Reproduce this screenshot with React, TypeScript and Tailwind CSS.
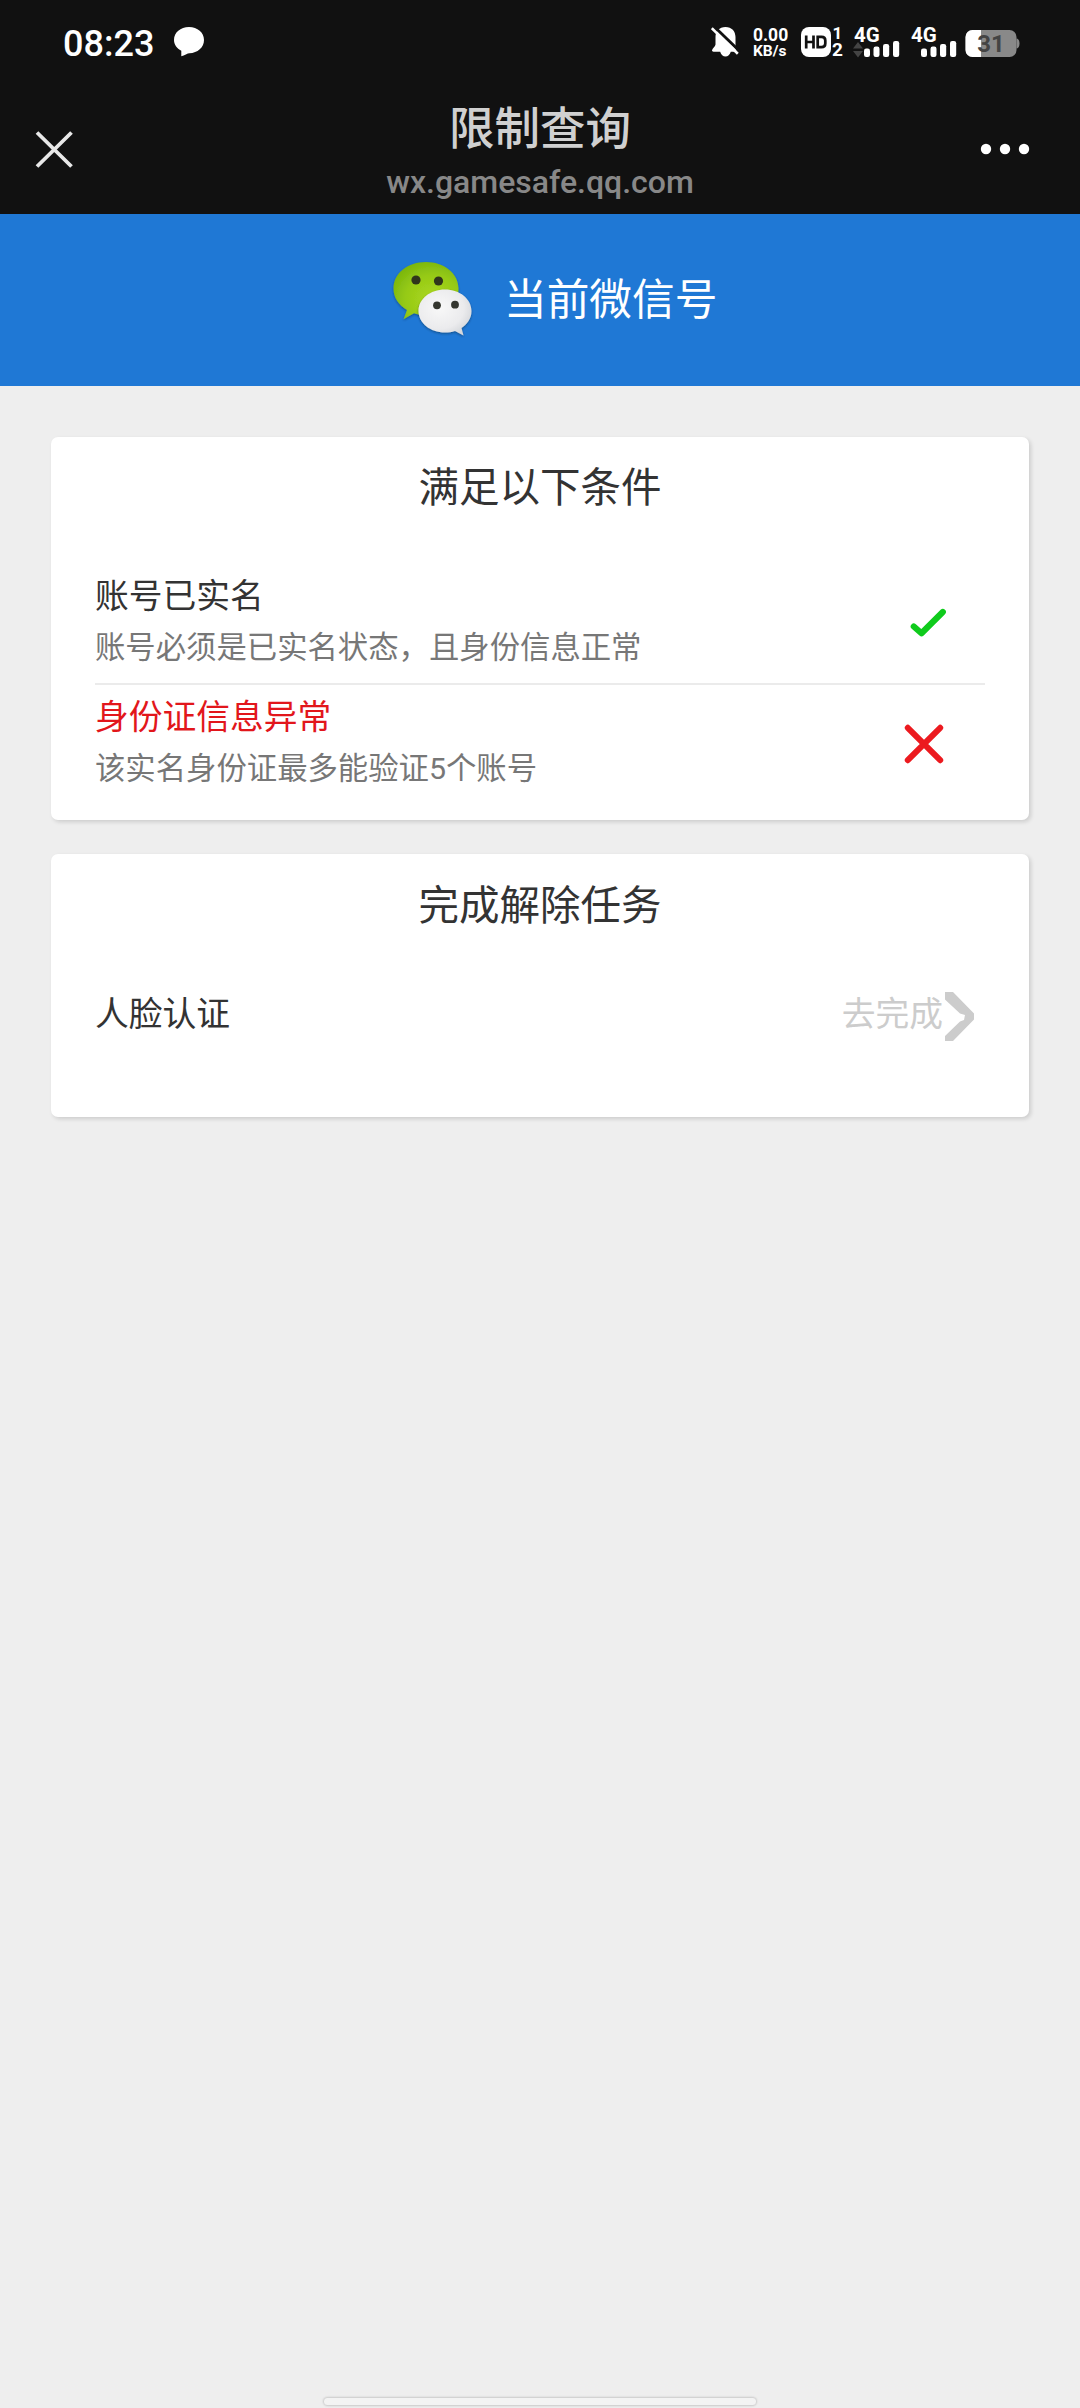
import React from "react";

const CJK = "font-['Roboto','Noto_Sans_CJK_SC',sans-serif]";

function MutedBell() {
  return (
    <svg className="block h-[32px] w-[30px]" viewBox="0 0 30 32">
      <path
        d="M14.500 1C8.300 1 4.500 5.200 4.500 11V18.500C4.500 20.500 1 22.500 1 24.500C1 25.300 1.500 25.700 2.500 25.700H9.200C10 28.700 12 30.500 14.500 30.500C17 30.500 18.800 28.700 19.800 25.700H24.500C25.500 25.700 25.500 24.500 24.900 23.700C24.500 22.700 24.500 20.500 24.500 18.500V11C24.500 5.200 20.700 1 14.500 1Z"
        fill="#fff"
      />
      <path d="M3 0.500L29 25.500" stroke="#111" strokeWidth="3" />
      <path d="M0.800 2.200L26.800 27.700" stroke="#fff" strokeWidth="2.600" />
    </svg>
  );
}

function HdBadge() {
  return (
    <div className="flex items-start">
      <svg className="block h-[32px] w-[31px]" viewBox="0 0 31 32">
        <rect x="1" y="1" width="30" height="30" rx="8" fill="#fff" />
        <path
          d="M6.200 9.500V22.500M13.500 9.500V22.500M6.200 16H13.500M17.700 10.800H21.500Q25.300 10.800 25.300 14.500V17.500Q25.300 21.200 21.500 21.200H17.700Z"
          fill="none"
          stroke="#111"
          strokeWidth="2.700"
        />
      </svg>
      <div className="flex w-[13px] flex-col items-center font-bold">
        <span className="text-[17px] leading-[15px]">1</span>
        <span className="text-[19px] leading-[18px]">2</span>
      </div>
    </div>
  );
}

function Signal({ arrows }: { arrows?: boolean }) {
  return (
    <div className="grid h-[32px] w-[50px]">
      <span className="col-start-1 row-start-1 ml-[2px] text-[20.500px] leading-[18px] font-bold">4G</span>
      <svg className="col-start-1 row-start-1 block h-[32px] w-[50px]" viewBox="0 0 50 32">
        {arrows && <path d="M1 22.500L6 16L11 22.500ZM1 25L6 31.500L11 25Z" fill="#444" />}
        <rect x="12" y="22.500" width="6" height="8.500" rx="2.200" fill="#fff" />
        <rect x="21.500" y="20.500" width="6" height="10.500" rx="2.200" fill="#fff" />
        <rect x="31" y="18" width="6.200" height="13" rx="2.200" fill="#fff" />
        <rect x="41" y="15" width="6.200" height="16" rx="2.200" fill="#fff" />
      </svg>
    </div>
  );
}

function Battery() {
  return (
    <div className="grid h-[32px] w-[56px]">
      <svg className="col-start-1 row-start-1 block h-[32px] w-[56px]" viewBox="0 0 56 32">
        <clipPath id="battery-body">
          <rect x="0.500" y="4" width="51" height="27" rx="7" />
        </clipPath>
        <g clipPath="url(#battery-body)">
          <rect x="0" y="0" width="56" height="32" fill="#898989" />
          <rect x="0" y="0" width="16" height="32" fill="#fff" />
        </g>
        <path d="M51.500 12.500H52Q54.500 13.500 54.500 17.500Q54.500 21.500 52 22.500H51.500Z" fill="#898989" />
      </svg>
      <span className="col-start-1 row-start-1 mt-[4px] mr-[4px] text-center text-[24px] leading-[28px] font-bold text-[#444]">31</span>
    </div>
  );
}

function WeChatLogo() {
  return (
    <svg className="block h-[80px] w-[84px]" viewBox="0 0 84 80">
      <defs>
        <radialGradient id="logo-green" cx="0.6" cy="0.65" r="0.7">
          <stop offset="0" stopColor="#acd81e" />
          <stop offset="0.6" stopColor="#96ca17" />
          <stop offset="1" stopColor="#79b50c" />
        </radialGradient>
        <radialGradient id="logo-white" cx="0.4" cy="0.4" r="0.65">
          <stop offset="0" stopColor="#f8f8f8" />
          <stop offset="0.7" stopColor="#ebebed" />
          <stop offset="1" stopColor="#d6d8dc" />
        </radialGradient>
        <filter id="logo-shadow" x="-20%" y="-20%" width="140%" height="140%">
          <feDropShadow dx="0" dy="1.200" stdDeviation="1.200" floodColor="#123" floodOpacity="0.450" />
        </filter>
      </defs>
      <path
        filter="url(#logo-shadow)"
        d="M36 4C53.500 4 68.500 15 68.500 30.500C68.500 46 54 57.500 36 57.500C31.500 57.500 27 56.500 24 55.300L13.500 61.300L17 52C8.500 47 3.500 39.500 3.500 30.500C3.500 15 18 4 36 4Z"
        fill="url(#logo-green)"
      />
      <circle cx="26" cy="22" r="4.600" fill="#30351c" />
      <circle cx="48.500" cy="23" r="4.600" fill="#30351c" />
      <path
        filter="url(#logo-shadow)"
        d="M55 31.500C69.800 31.500 81.500 41 81.500 53C81.500 60.200 77.500 66 71.500 70L73.500 77.500L65 73C62 74 58.700 74.500 55 74.500C40.200 74.500 28.500 65 28.500 53C28.500 41 40.200 31.500 55 31.500Z"
        fill="url(#logo-white)"
      />
      <circle cx="47" cy="47.300" r="3.900" fill="#34362f" />
      <circle cx="65" cy="46.700" r="3.900" fill="#34362f" />
    </svg>
  );
}

function Check() {
  return (
    <svg className="block h-[32px] w-[38px]" viewBox="0 0 38 32">
      <path d="M4.800 19.500L12.500 26.300L33.800 5" fill="none" stroke="#0fcb1c" strokeWidth="6.200" strokeLinecap="round" strokeLinejoin="round" />
    </svg>
  );
}

function Cross() {
  return (
    <svg className="block h-[42px] w-[42px]" viewBox="0 0 42 42">
      <path d="M4.800 4.800L37.200 37.200M37.200 4.800L4.800 37.200" fill="none" stroke="#ec1a1f" strokeWidth="6" strokeLinecap="round" />
    </svg>
  );
}

function StatusBar() {
  return (
    <div className="flex h-[84px] items-start pt-[26px] text-white">
      <span className="mt-px ml-[63px] w-[92px] text-[36px] leading-[34px] font-medium">08:23</span>
      <svg className="mt-px ml-[18px] block h-[31px] w-[32px]" viewBox="0 0 32 31">
        <path d="M16 0C24.500 0 31 5.500 31 13C31 20.500 24.500 26 16.500 26.200C14.500 26.200 11.500 28.500 8.300 29.200V23.700C3.800 21.300 1 17.500 1 13C1 5.500 7.500 0 16 0Z" fill="#fff" />
      </svg>
      <div className="ml-auto flex items-start pr-[59px]">
        <MutedBell />
        <div className="ml-[12px] flex w-[36px] flex-col font-bold">
          <span className="text-[17.500px] leading-[18px]">0.00</span>
          <span className="text-[15.500px] leading-[15px]">KB/s</span>
        </div>
        <div className="ml-[11px]"><HdBadge /></div>
        <div className="ml-[8px]"><Signal arrows /></div>
        <div className="ml-[7px]"><Signal /></div>
        <div className="ml-[6px]"><Battery /></div>
      </div>
    </div>
  );
}

function TitleBar() {
  return (
    <div className="grid h-[130px] grid-cols-[1fr_auto_1fr] items-start">
      <svg className="mt-[46px] ml-[35px] block h-[38px] w-[38px]" viewBox="0 0 38 38">
        <path d="M2 2.500L36.500 36.500M36.500 2.500L2 36.500" stroke="#e8e8e8" strokeWidth="3.800" />
      </svg>
      <div className="flex flex-col items-center pt-[14px]">
        <h1 className="text-[45.500px] leading-[64px] font-medium text-[#d0d0d0]">限制查询</h1>
        <span className="mt-[2px] text-[32px] leading-[36px] font-medium text-[#888]">wx.gamesafe.qq.com</span>
      </div>
      <svg className="mt-[59px] mr-[50px] block h-[12px] w-[50px] justify-self-end" viewBox="0 0 50 12">
        <circle cx="6" cy="6" r="5.200" fill="#fff" />
        <circle cx="25" cy="6" r="5.200" fill="#fff" />
        <circle cx="44" cy="6" r="5.200" fill="#fff" />
      </svg>
    </div>
  );
}

function Card({ title, className, children }: { title: string; className: string; children: React.ReactNode }) {
  return (
    <section className={`mx-[51px] rounded-[7px] bg-white px-[44px] shadow-[2px_2px_4px_rgba(0,0,0,0.14)] ${className}`}>
      <h2 className="text-center text-[40.500px] leading-[64px] text-[#333]">{title}</h2>
      {children}
    </section>
  );
}

function Condition({ title, note, failed }: { title: string; note: string; failed?: boolean }) {
  return (
    <div className="flex items-center justify-between">
      <div className="flex flex-col gap-[3px]">
        <h3 className={`text-[33.750px] leading-[48px] ${failed ? "text-[#e2161b]" : "text-[#333]"}`}>{title}</h3>
        <p className="text-[30.375px] leading-[48px] text-[#777]">{note}</p>
      </div>
      <div className={failed ? "mt-px mr-[40px]" : "mr-[38px]"}>{failed ? <Cross /> : <Check />}</div>
    </div>
  );
}

export default function App() {
  return (
    <div className={`flex h-[2408px] w-[1080px] flex-col bg-[#eee] ${CJK}`} lang="zh-CN">
      <header className="h-[214px] bg-[#111]">
        <StatusBar />
        <TitleBar />
      </header>
      <div className="flex h-[172px] items-start bg-[#1f78d5] pt-[44px] pl-[390px]">
        <WeChatLogo />
        <span className="mt-[10px] ml-[30px] text-[42.700px] leading-[64px] text-white">当前微信号</span>
      </div>
      <Card title="满足以下条件" className="mt-[51px] h-[383px] pt-[19px]">
        <div className="mt-[53px] border-b-2 border-[#ebebeb] pb-[11px]">
          <Condition title="账号已实名" note="账号必须是已实名状态，且身份信息正常" />
        </div>
        <div className="pt-[9px]">
          <Condition title="身份证信息异常" note="该实名身份证最多能验证5个账号" failed />
        </div>
      </Card>
      <Card title="完成解除任务" className="mt-[34px] h-[263px] pt-[20px]">
        <div className="mt-[53px] flex items-start justify-between pr-[11px]">
          <h3 className="text-[33.750px] leading-[48px] text-[#333]">人脸认证</h3>
          <div className="flex items-start text-[#ccc]">
            <span className="text-[33.750px] leading-[48px]">去完成</span>
            <svg className="mt-px ml-[2px] block h-[49px] w-[29px]" viewBox="0 0 29 49">
              <path d="M0 0H8L29 21.500V27.500L8 49H0V44L15 29.500L19 28L20 23L15 21.500L0 7.500Z" fill="#ccc" />
            </svg>
          </div>
        </div>
      </Card>
      <div className="mt-auto mb-[3px] flex justify-center">
        <div className="h-[7px] w-[432px] rounded-full bg-[#f3f3f3] shadow-[0_0_2px_1px_rgba(0,0,0,0.150)]" />
      </div>
    </div>
  );
}
